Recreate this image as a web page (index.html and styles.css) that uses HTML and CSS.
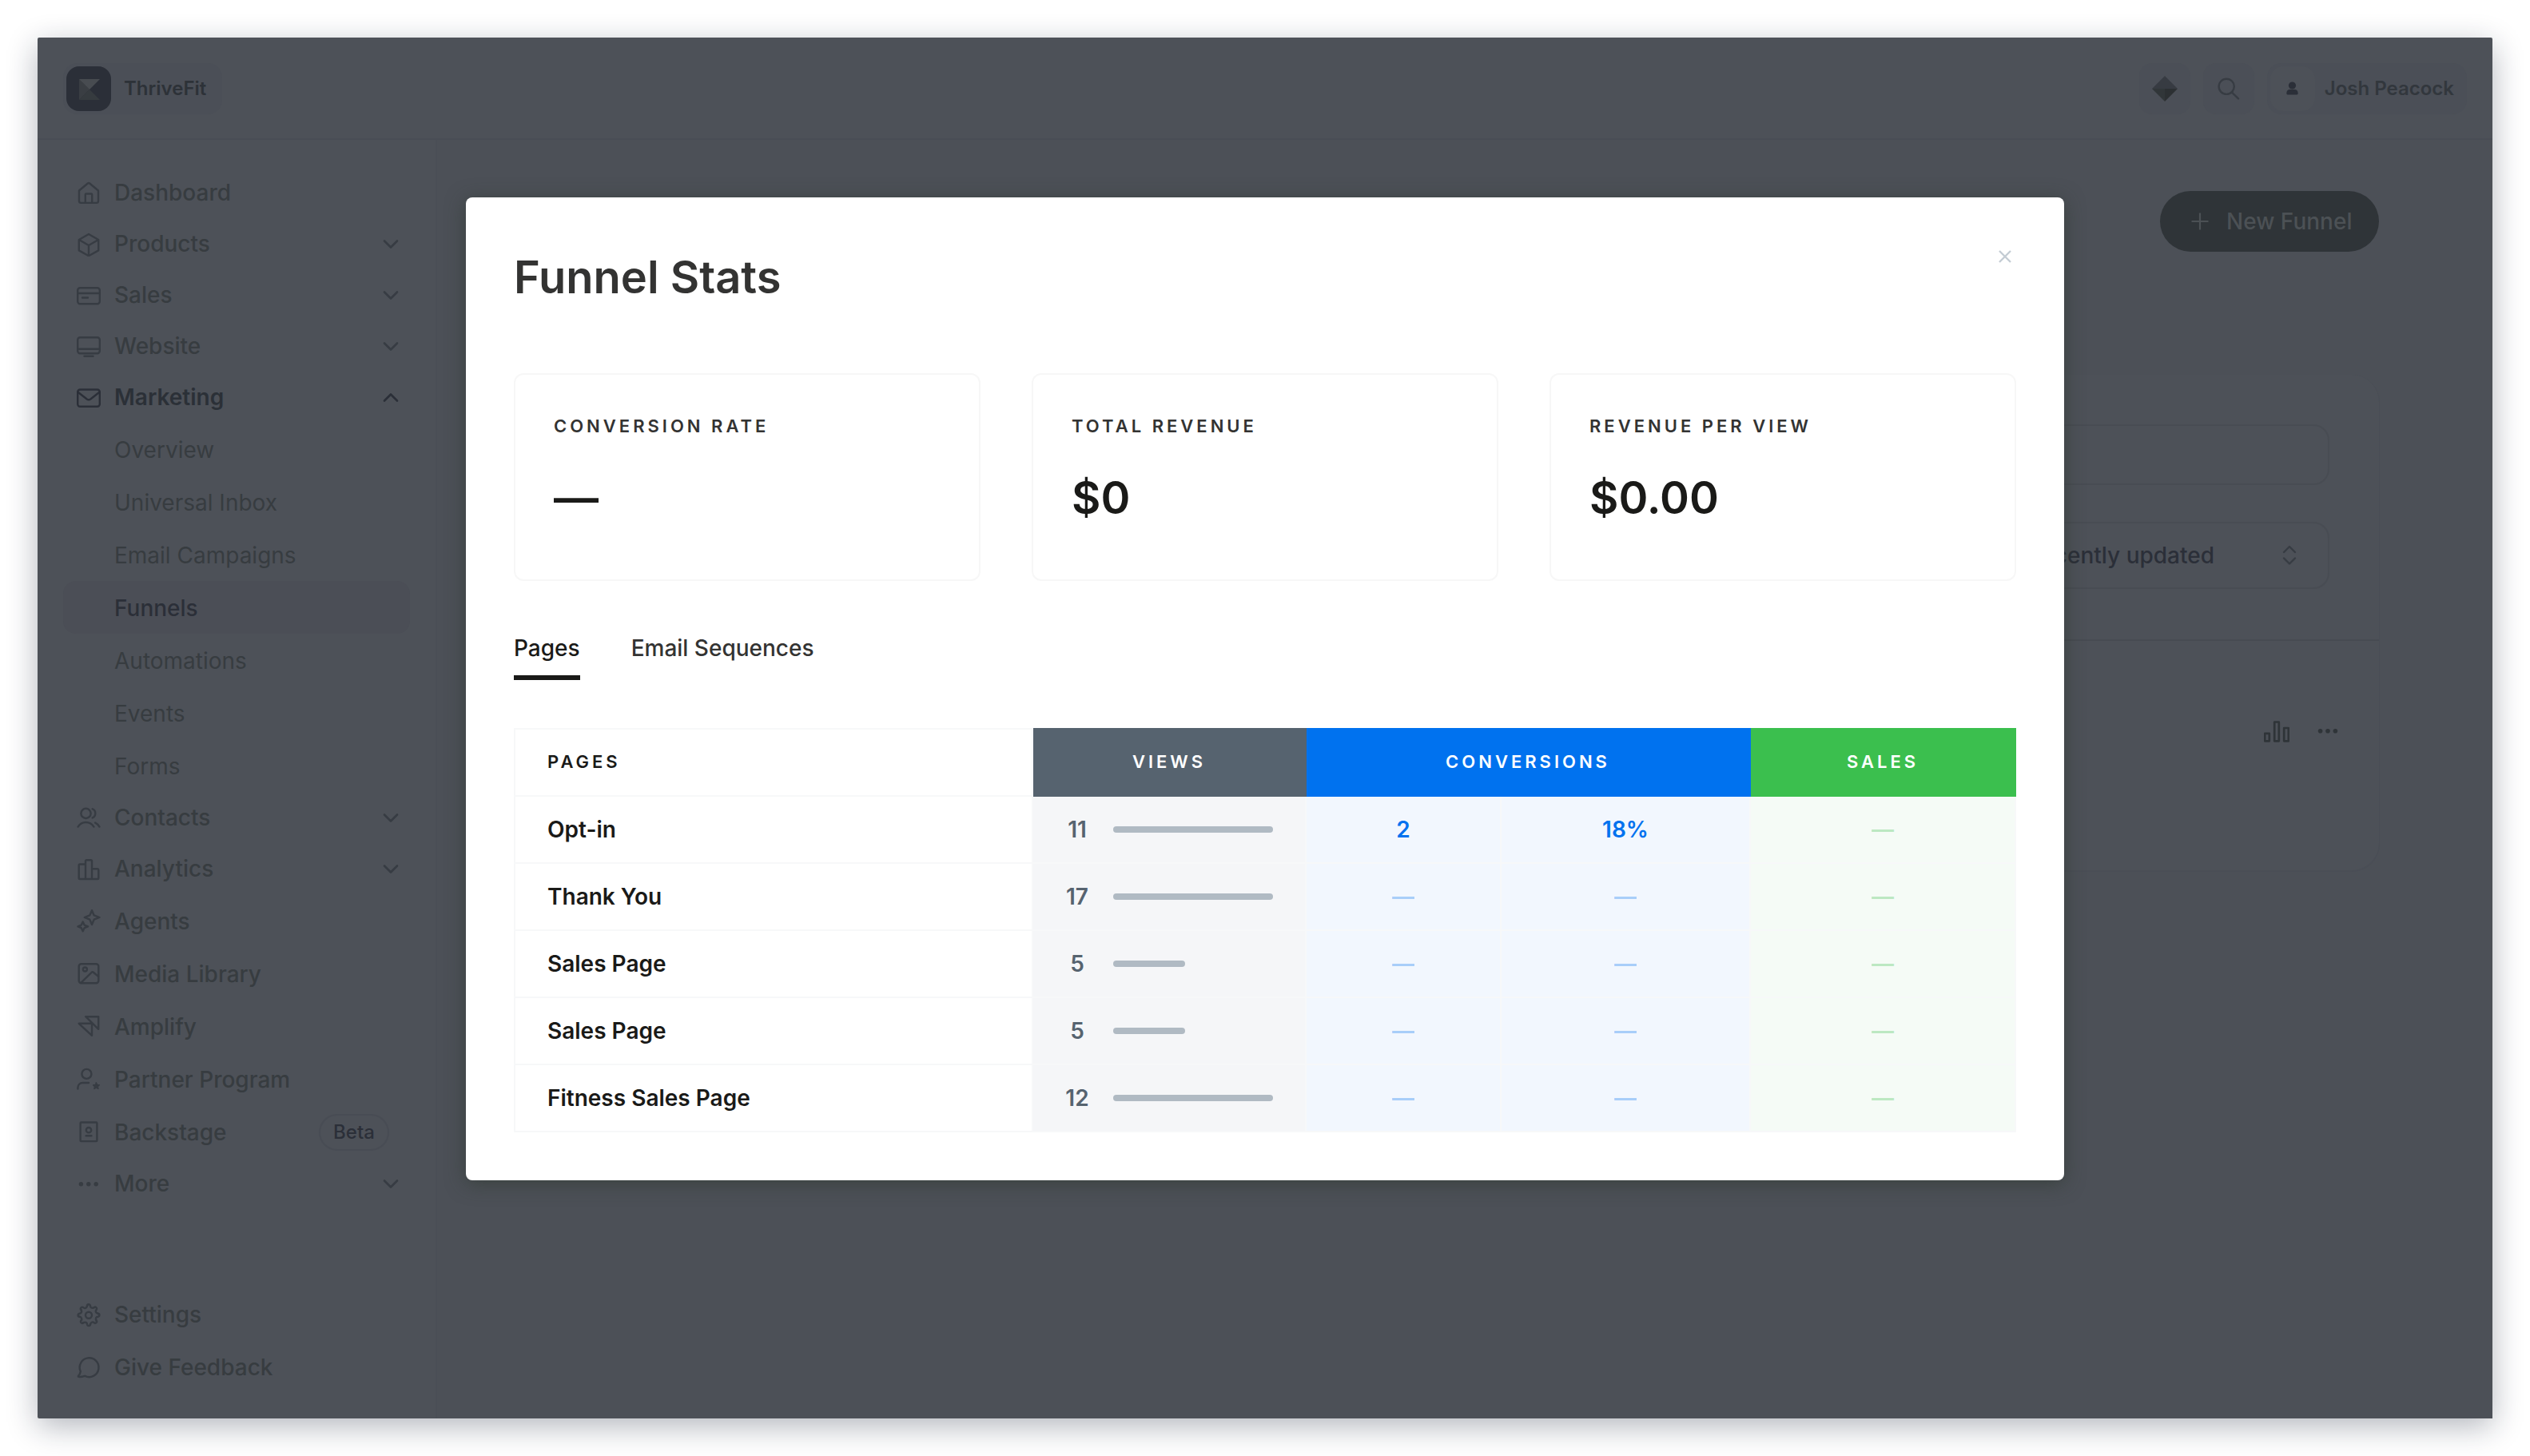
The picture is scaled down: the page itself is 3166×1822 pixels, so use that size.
FILE: index.html
```html
<!DOCTYPE html>
<html lang="en">
<head>
    <meta charset="UTF-8">
    <meta name="viewport" content="width=device-width, initial-scale=1.0">
    <title>Funnels - ThriveFit</title>
    <link rel="stylesheet" href="styles.css">
</head>
<body>
    <div class="window">
        <header class="topbar">
            <div class="site-pill">
                <svg class="site-logo" viewBox="0 0 56 56">
                    <rect width="56" height="56" rx="16" fill="#2b2f38"/>
                    <path d="M16 16 29 29 16 42Z" fill="#3a3e43"/>
                    <path d="M16 16H42L29 29Z" fill="#484c51"/>
                    <path d="M16 42 29 29 42 42Z" fill="#363b3f"/>
                </svg>
                <span>ThriveFit</span>
            </div>
            <div class="topbar-right">
                <div class="tile">
                    <svg class="icon" viewBox="0 0 32 32">
                        <path d="M16 0 32 16H0Z" fill="#373b42"/>
                        <path d="M0 16H16V32Z" fill="#313639"/>
                        <path d="M32 16H16V32Z" fill="#2c3033"/>
                    </svg>
                </div>
                <div class="tile">
                    <svg class="icon line" viewBox="0 0 32 32"><circle cx="13.2" cy="13.3" r="9.6"/><path d="m19.8 20.4 8.2 8"/></svg>
                </div>
                <div class="profile">
                    <div class="avatar">
                        <svg width="56" height="56" viewBox="0 0 56 56" fill="#2b2f38"><circle cx="27.5" cy="24" r="4.6"/><path d="M20.3 34c0-3.4 1.6-5 4.2-5h6c2.6 0 4.2 1.6 4.2 5 0 .9-.5 1.4-1.4 1.4H21.7c-.9 0-1.4-.5-1.4-1.4z"/></svg>
                    </div>
                    <span>Josh Peacock</span>
                </div>
            </div>
        </header>

        <div class="layout">
            <nav class="sidebar">
                <div class="nav-main">
                    <a class="nav-link">
                        <svg class="icon line" viewBox="0 0 32 32"><path d="M4 13.5 14.8 4.5a1.9 1.9 0 0 1 2.4 0L28 13.5V26.500a2.4 2.4 0 0 1-2.4 2.4H6.4A2.4 2.4 0 0 1 4 26.500zM11.8 28.900V18.500a1 1 0 0 1 1-1h6.400a1 1 0 0 1 1 1v10.400"/></svg>
                        <span>Dashboard</span>
                    </a>
                    <a class="nav-link toggle">
                        <svg class="icon line" viewBox="0 0 32 32"><path d="M16 4 28.2 11V24.4L16 31.2 3.8 24.4V11zM4.3 11.3 16 18l11.700-6.700M16 18v13"/></svg>
                        <span>Products</span>
                        <svg class="chevron" viewBox="0 0 24 24"><path d="m4 8.5 8 8 8-8"/></svg>
                    </a>
                    <a class="nav-link toggle">
                        <svg class="icon line" viewBox="0 0 32 32"><rect x="2.2" y="7.2" width="27.6" height="20" rx="3"/><path d="M2.2 14h27.600M8 19.500h7"/></svg>
                        <span>Sales</span>
                        <svg class="chevron" viewBox="0 0 24 24"><path d="m4 8.5 8 8 8-8"/></svg>
                    </a>
                    <a class="nav-link toggle">
                        <svg class="icon line" viewBox="0 0 32 32"><rect x="2.2" y="5.2" width="27.6" height="20" rx="3"/><path d="M2.2 19.700h27.600M10.500 28.800h11"/></svg>
                        <span>Website</span>
                        <svg class="chevron" viewBox="0 0 24 24"><path d="m4 8.5 8 8 8-8"/></svg>
                    </a>
                    <a class="nav-link toggle open">
                        <svg class="icon line" viewBox="0 0 32 32"><rect x="2.2" y="6.5" width="27.6" height="21.3" rx="3"/><path d="M2.600 9.800 13.800 18.500q2.200 1.500 4.400 0L29.400 9.800"/></svg>
                        <span>Marketing</span>
                        <svg class="chevron" viewBox="0 0 24 24"><path d="m4 16.5 8-8 8 8"/></svg>
                    </a>
                    <a class="nav-link sub">Overview</a>
                    <a class="nav-link sub">Universal Inbox</a>
                    <a class="nav-link sub">Email Campaigns</a>
                    <a class="nav-link sub active">Funnels</a>
                    <a class="nav-link sub">Automations</a>
                    <a class="nav-link sub">Events</a>
                    <a class="nav-link sub">Forms</a>
                    <a class="nav-link toggle">
                        <svg class="icon line" viewBox="0 0 32 32"><circle cx="12.5" cy="10.9" r="6.1"/><path d="M20.700 5.300c4.800 1.600 4.800 9.500 0 11.100M2.600 27.600c4.800-7.400 15-7.400 19.800 0M24.200 22.600q3.400 1.600 5.200 5"/></svg>
                        <span>Contacts</span>
                        <svg class="chevron" viewBox="0 0 24 24"><path d="m4 8.5 8 8 8-8"/></svg>
                    </a>
                    <a class="nav-link toggle">
                        <svg class="icon line" viewBox="0 0 32 32"><path d="M12 29V6.500a1.300 1.300 0 0 1 1.300-1.300h5.400A1.300 1.300 0 0 1 20 6.500V29M12 10.500H5a1.300 1.300 0 0 0-1.300 1.300V27.700A1.300 1.300 0 0 0 5 29h22a1.300 1.300 0 0 0 1.300-1.300V17.500a1.300 1.300 0 0 0-1.300-1.300h-7"/></svg>
                        <span>Analytics</span>
                        <svg class="chevron" viewBox="0 0 24 24"><path d="m4 8.5 8 8 8-8"/></svg>
                    </a>
                    <a class="nav-link">
                        <svg class="icon line" viewBox="0 0 32 32"><path d="m20 2.200 2.700 6.200L29.500 11l-6.800 2.600L20 20l-2.700-6.400L10.800 11l6.500-2.600zM8.700 16.500l1.900 4.100 4.500 1.800-4.500 1.800-1.900 4-1.900-4-4.300-1.800 4.300-1.800z"/></svg>
                        <span>Agents</span>
                    </a>
                    <a class="nav-link">
                        <svg class="icon line" viewBox="0 0 32 32"><rect x="3.7" y="3.2" width="24.6" height="24" rx="3"/><circle cx="11.4" cy="10" r="2.5"/><path d="M6.600 26.600 20 13.500q.8-.7 1.600 0l6.400 5.300"/></svg>
                        <span>Media Library</span>
                    </a>
                    <a class="nav-link">
                        <svg class="icon line" viewBox="0 0 32 32"><path d="M12.200 3.200h16v15.600zM3.700 11.800H20v15z"/></svg>
                        <span>Amplify</span>
                    </a>
                    <a class="nav-link">
                        <svg class="icon line" viewBox="0 0 32 32"><circle cx="13.4" cy="8.9" r="6"/><path d="M2.400 27.600V26a6 6 0 0 1 6-6H16"/><path class="solid" d="m25.400 19.500 1.400 2.800 3 .4-2.200 2.100.6 3-2.800-1.400-2.700 1.400.5-3-2.200-2.100 3.100-.4z"/></svg>
                        <span>Partner Program</span>
                    </a>
                    <a class="nav-link">
                        <svg class="icon line" viewBox="0 0 32 32"><rect x="5.6" y="3.5" width="20.8" height="23.6" rx="1"/><circle cx="16" cy="13.2" r="3.2"/><path d="M12.700 20.300h6.600"/></svg>
                        <span>Backstage</span>
                        <span class="badge">Beta</span>
                    </a>
                    <a class="nav-link toggle">
                        <svg class="icon" viewBox="0 0 32 32" fill="#373c42"><circle cx="6.4" cy="16.7" r="2.7"/><circle cx="15.8" cy="16.7" r="2.7"/><circle cx="25.2" cy="16.7" r="2.7"/></svg>
                        <span>More</span>
                        <svg class="chevron" viewBox="0 0 24 24"><path d="m4 8.5 8 8 8-8"/></svg>
                    </a>
                </div>
                <div class="nav-footer">
                    <a class="nav-link">
                        <svg class="icon line" viewBox="0 0 32 32">
                            <g transform="translate(16 16.7)">
                                <circle r="4"/>
                                <path id="tooth" d="M11.400-2a2 2 0 0 1 0 4c-2 0-3.300 2.100-1.930 4.650"/>
                                <use href="#tooth" transform="rotate(45)"/>
                                <use href="#tooth" transform="rotate(90)"/>
                                <use href="#tooth" transform="rotate(135)"/>
                                <use href="#tooth" transform="rotate(180)"/>
                                <use href="#tooth" transform="rotate(225)"/>
                                <use href="#tooth" transform="rotate(270)"/>
                                <use href="#tooth" transform="rotate(315)"/>
                            </g>
                        </svg>
                        <span>Settings</span>
                    </a>
                    <a class="nav-link">
                        <svg class="icon line" viewBox="0 0 32 32"><path d="M5.800 21.200a11.900 11.900 0 1 1 5.400 5.600q-4 1.300-7.800 1.100-1-.4-.2-1.400 2-2 2.600-5.300z"/></svg>
                        <span>Give Feedback</span>
                    </a>
                </div>
            </nav>

            <main class="content">
                <div class="actions">
                    <button class="new-funnel">
                        <svg width="24" height="24" viewBox="0 0 24 24"><path d="M12 1.500v21M1.500 12h21"/></svg>
                        New Funnel
                    </button>
                </div>
                <section class="panel">
                    <div class="filters">
                        <div class="field search"></div>
                        <div class="field select">
                            <span>Recently updated</span>
                            <svg class="icon line" viewBox="0 0 32 32"><path d="m9 12 7-7 7 7M9 19.500l7 7 7-7"/></svg>
                        </div>
                    </div>
                    <div class="funnel-row">
                        <svg class="icon line" viewBox="0 0 32 32"><path d="M1.200 18.800h5.600v9.500H1.200zM13.200 4.500h5.600v23.800h-5.600zM25.200 12h5.600v16.300h-5.600z"/></svg>
                        <svg class="icon" viewBox="0 0 32 32" fill="#2f3438"><circle cx="6.6" cy="15.7" r="2.8"/><circle cx="16" cy="15.7" r="2.8"/><circle cx="25.4" cy="15.7" r="2.8"/></svg>
                    </div>
                </section>
            </main>
        </div>

        <div class="modal">
            <div class="modal-head">
                <h1>Funnel Stats</h1>
                <svg class="close" width="28" height="28" viewBox="0 0 28 28"><path d="m7 7 14 14M21 7 7 21"/></svg>
            </div>

            <div class="stats">
                <div class="stat">
                    <div class="stat-label">Conversion Rate</div>
                    <div class="stat-value">—</div>
                </div>
                <div class="stat">
                    <div class="stat-label">Total Revenue</div>
                    <div class="stat-value">$0</div>
                </div>
                <div class="stat">
                    <div class="stat-label">Revenue Per View</div>
                    <div class="stat-value">$0.00</div>
                </div>
            </div>

            <div class="tabs">
                <a class="tab active">Pages</a>
                <a class="tab">Email Sequences</a>
            </div>

            <table class="pages-table">
                <colgroup>
                    <col class="col-page"><col class="col-views"><col class="col-count"><col class="col-rate"><col class="col-sales">
                </colgroup>
                <thead>
                    <tr>
                        <th class="page">Pages</th>
                        <th class="views">Views</th>
                        <th class="conv" colspan="2">Conversions</th>
                        <th class="sales">Sales</th>
                    </tr>
                </thead>
                <tbody>
                    <tr>
                        <td class="page">Opt-in</td>
                        <td class="views"><div class="meter"><b>11</b><i style="width: 200px"></i></div></td>
                        <td class="conv">2</td>
                        <td class="conv">18%</td>
                        <td class="sales"><span class="empty">—</span></td>
                    </tr>
                    <tr>
                        <td class="page">Thank You</td>
                        <td class="views"><div class="meter"><b>17</b><i style="width: 200px"></i></div></td>
                        <td class="conv"><span class="empty">—</span></td>
                        <td class="conv"><span class="empty">—</span></td>
                        <td class="sales"><span class="empty">—</span></td>
                    </tr>
                    <tr>
                        <td class="page">Sales Page</td>
                        <td class="views"><div class="meter"><b>5</b><i style="width: 90px"></i></div></td>
                        <td class="conv"><span class="empty">—</span></td>
                        <td class="conv"><span class="empty">—</span></td>
                        <td class="sales"><span class="empty">—</span></td>
                    </tr>
                    <tr>
                        <td class="page">Sales Page</td>
                        <td class="views"><div class="meter"><b>5</b><i style="width: 90px"></i></div></td>
                        <td class="conv"><span class="empty">—</span></td>
                        <td class="conv"><span class="empty">—</span></td>
                        <td class="sales"><span class="empty">—</span></td>
                    </tr>
                    <tr>
                        <td class="page">Fitness Sales Page</td>
                        <td class="views"><div class="meter"><b>12</b><i style="width: 200px"></i></div></td>
                        <td class="conv"><span class="empty">—</span></td>
                        <td class="conv"><span class="empty">—</span></td>
                        <td class="sales"><span class="empty">—</span></td>
                    </tr>
                </tbody>
            </table>
        </div>
    </div>
</body>
</html>
```

FILE: styles.css
```css
* {
    box-sizing: border-box;
}

body {
    margin: 0;
    padding: 47px;
    height: 1822px;
    overflow: hidden;
    background: #fff;
    font-family: Inter, "Liberation Sans", sans-serif;
    font-size: 28px;
    font-weight: 500;
    color: #373c40;
}

.window {
    position: relative;
    display: flex;
    flex-direction: column;
    height: 1728px;
    border-radius: 2px;
    background: #4d5158;
    box-shadow: 0 10px 38px rgba(20, 28, 50, 0.32);
}

.icon {
    flex: none;
    width: 32px;
    height: 32px;
}

.line {
    fill: none;
    stroke: #373c43;
    stroke-width: 2.4;
    stroke-linecap: round;
    stroke-linejoin: round;
}

.line .solid {
    fill: #373c43;
    stroke-width: 1;
}

/* Top bar */
.topbar {
    display: flex;
    justify-content: space-between;
    align-items: flex-start;
    height: 128px;
    padding: 32px;
    border-bottom: 2px solid #494d55;
    font-size: 24px;
    font-weight: 600;
}

.site-pill,
.profile {
    display: flex;
    align-items: center;
    height: 64px;
    padding: 4px;
    border-radius: 18px;
    background: #4b4f57;
}

.site-pill {
    gap: 16px;
    padding-right: 20px;
    color: #2d3238;
}

.site-pill span,
.profile span {
    padding-bottom: 1px;
}

.site-logo {
    width: 56px;
    height: 56px;
}

.topbar-right {
    display: flex;
    gap: 16px;
}

.tile {
    display: flex;
    align-items: center;
    justify-content: center;
    width: 64px;
    height: 64px;
    border-radius: 16px;
    background: #4b4f57;
}

.profile {
    gap: 12px;
    padding-right: 16px;
    color: #32373d;
}

.avatar {
    width: 56px;
    height: 56px;
    border-radius: 16px;
    background: #4d5158;
}

/* Sidebar */
.layout {
    display: flex;
    flex: 1;
}

.sidebar {
    display: flex;
    flex-direction: column;
    justify-content: space-between;
    width: 500px;
    padding: 32px;
    border-right: 2px solid #4a4e56;
}

.nav-link {
    display: flex;
    align-items: center;
    gap: 16px;
    width: 434px;
    height: 66px;
    padding: 1px 12px 0 16px;
    border-radius: 16px;
}

.nav-link.toggle {
    height: 64px;
    padding-top: 0;
    padding-bottom: 1px;
}

.nav-link.sub {
    padding-left: 64px;
    font-weight: 400;
}

.nav-link.sub.active {
    background: #4b4e56;
    color: #2b2f38;
    font-weight: 500;
}

.nav-link.open {
    color: #2b3037;
    font-weight: 600;
}

.nav-link.open .line,
.nav-link.open .chevron {
    stroke: #2b2f38;
}

.chevron {
    width: 24px;
    height: 24px;
    margin-left: auto;
    fill: none;
    stroke: #373c43;
    stroke-width: 2.6;
    stroke-linecap: round;
    stroke-linejoin: round;
}

.badge {
    margin: 0 14px 0 auto;
    width: 88px;
    height: 46px;
    border: 2px solid #484c54;
    border-radius: 23px;
    color: #2b2f38;
    font-size: 24px;
    line-height: 42px;
    text-align: center;
}

/* Main content */
.content {
    flex: 1;
    padding: 64px 142px;
    background: #4c5057;
}

.actions {
    display: flex;
    justify-content: flex-end;
}

.new-funnel {
    display: flex;
    align-items: center;
    gap: 21px;
    width: 274px;
    height: 76px;
    padding: 0 0 0 38px;
    border: 0;
    border-radius: 38px;
    background: #2f3438;
    color: #4c5155;
    font: inherit;
}

.new-funnel svg {
    stroke: #4c5155;
    stroke-width: 2.2;
}

.panel {
    margin-top: 154px;
    height: 620px;
    border-radius: 34px;
    background: #4d5158;
    box-shadow: 0 1px 0 1px #4a4e56;
}

.filters {
    height: 333px;
    padding: 62px;
    border-bottom: 2px solid #474b52;
}

.field {
    border: 2px solid #484c53;
    border-radius: 20px;
}

.search {
    height: 76px;
}

.select {
    display: flex;
    align-items: center;
    justify-content: flex-end;
    gap: 78px;
    height: 84px;
    margin-top: 46px;
    padding-right: 32px;
    color: #2b2f38;
}

.funnel-row {
    display: flex;
    justify-content: flex-end;
    gap: 32px;
    padding: 97px 48px 0 0;
}

.funnel-row .line {
    stroke: #2f3438;
    stroke-width: 2.7;
}

/* Stats modal */
.modal {
    position: absolute;
    top: 200px;
    left: 536px;
    width: 2000px;
    height: 1230px;
    padding: 60px;
    border-radius: 8px;
    background: #fff;
    box-shadow: 0 4px 24px rgba(45, 55, 45, 0.6);
    color: #1a1a18;
}

.modal-head {
    display: flex;
    justify-content: space-between;
    height: 80px;
}

.modal-head h1 {
    margin: 0;
    font-size: 56px;
    font-weight: 600;
    line-height: 80px;
    color: #333332;
}

.close {
    stroke: #c4ccd4;
    stroke-width: 2.4;
}

.stats {
    display: grid;
    grid-template-columns: repeat(3, 1fr);
    gap: 64px;
    margin-top: 80px;
}

.stat {
    height: 260px;
    padding: 48px;
    border: 2px solid #f7f7f7;
    border-radius: 12px;
}

.stat-label {
    font-size: 22px;
    font-weight: 600;
    line-height: 32px;
    letter-spacing: 4px;
    text-transform: uppercase;
    color: #333332;
}

.stat-value {
    margin-top: 40px;
    font-size: 56px;
    font-weight: 600;
    line-height: 68px;
}

.tabs {
    display: flex;
    gap: 64px;
    margin-top: 64px;
}

.tab {
    padding-bottom: 14px;
    line-height: 40px;
    border-bottom: 6px solid transparent;
    color: #333332;
}

.tab.active {
    border-color: #1a1a18;
    color: #1a1a18;
}

.pages-table {
    width: 1880px;
    margin-top: 60px;
    border-collapse: collapse;
    table-layout: fixed;
    text-align: center;
    font-weight: 600;
}

.col-page { width: 648px; }
.col-views { width: 342px; }
.col-count { width: 244px; }
.col-rate { width: 312px; }
.col-sales { width: 332px; }

.pages-table th,
.pages-table td {
    height: 84px;
    padding: 0;
    border: 2px solid #f7f8f9;
}

.pages-table th {
    padding-bottom: 2px;
    font-size: 22px;
    font-weight: 600;
    letter-spacing: 4px;
    text-transform: uppercase;
    color: #fff;
}

.pages-table .page {
    padding-left: 40px;
    text-align: left;
    color: #1a1a18;
}

th.views {
    background: #56636f;
    border-color: #56636f !important;
}

th.conv {
    background: #0072ef;
    border-color: #0072ef !important;
}

th.sales {
    background: #3bbf4e;
    border-color: #3bbf4e !important;
}

td.views {
    background: #f5f6f8;
    color: #56636f;
}

td.conv {
    background: #f2f7fe;
    color: #0072ef;
}

td.sales {
    background: #f5fbf6;
    color: #3bbf4e;
}

.meter {
    display: flex;
    align-items: center;
    padding-left: 39px;
}

.meter b {
    width: 32px;
    margin-right: 29px;
    display: flex;
    justify-content: center;
    font-weight: 600;
}

.meter i {
    height: 8px;
    border-radius: 4px;
    background: #b0bac3;
}

.empty {
    opacity: 0.3;
}
```
